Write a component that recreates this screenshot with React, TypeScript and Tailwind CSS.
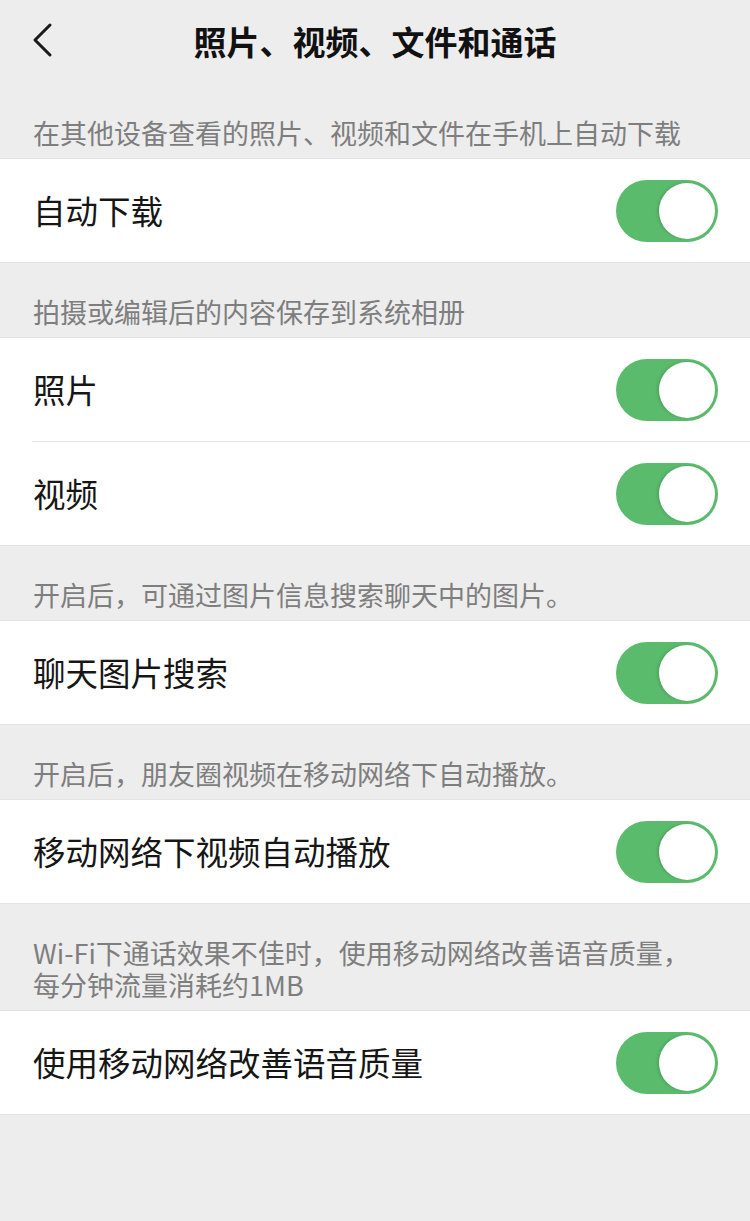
import { useState } from "react";

type Row = { id: string; label: string };
type Section = { caption: string[]; rows: Row[] };

const sections: Section[] = [
  {
    caption: ["在其他设备查看的照片、视频和文件在手机上自动下载"],
    rows: [{ id: "auto", label: "自动下载" }],
  },
  {
    caption: ["拍摄或编辑后的内容保存到系统相册"],
    rows: [
      { id: "photo", label: "照片" },
      { id: "video", label: "视频" },
    ],
  },
  {
    caption: ["开启后，可通过图片信息搜索聊天中的图片。"],
    rows: [{ id: "search", label: "聊天图片搜索" }],
  },
  {
    caption: ["开启后，朋友圈视频在移动网络下自动播放。"],
    rows: [{ id: "autoplay", label: "移动网络下视频自动播放" }],
  },
  {
    caption: ["Wi-Fi下通话效果不佳时，使用移动网络改善语音质量，", "每分钟流量消耗约1MB"],
    rows: [{ id: "voice", label: "使用移动网络改善语音质量" }],
  },
];

function Toggle({ on, onChange }: { on: boolean; onChange: () => void }) {
  return (
    <button
      onClick={onChange}
      className={`flex h-[62px] w-[102px] items-center rounded-full p-[3px] ${
        on ? "justify-end bg-[#5bbb6c]" : "justify-start bg-[#e5e5e5]"
      }`}
    >
      <span className="block h-[56px] w-[56px] rounded-full bg-white shadow-[-2px_0_3px_rgba(0,0,0,0.12)]" />
    </button>
  );
}

export default function App() {
  const [state, setState] = useState<Record<string, boolean>>({
    auto: true,
    photo: true,
    video: true,
    search: true,
    autoplay: true,
    voice: true,
  });

  return (
    <div
      className="min-h-[1221px] w-[750px] bg-[#ededed]"
      style={{ fontFamily: '"Noto Sans CJK SC", "Noto Sans", sans-serif' }}
    >
      <header className="relative flex h-[85px] items-center justify-center pb-[3px]">
        <button className="absolute left-[28px] top-[20px] flex h-[40px] w-[30px] items-center justify-center" aria-label="返回">
          <svg width="22" height="36" viewBox="0 0 22 36" fill="none">
            <path d="M18 3 L3 18 L18 33" stroke="#1a1a1a" strokeWidth="3" strokeLinecap="round" strokeLinejoin="round" />
          </svg>
        </button>
        <h1 className="text-[33px] font-semibold leading-none text-[#111]">照片、视频、文件和通话</h1>
      </header>

      {sections.map((s, i) => (
        <section key={i}>
          <div
            className={`px-[33px] pb-[9px] text-[27px] leading-[32px] text-[#7e7e7e] ${
              i === 0 ? "pt-[32px]" : "pt-[33px]"
            }`}
          >
            {s.caption.map((line) => (
              <p key={line}>{line}</p>
            ))}
          </div>
          <div className="border-y border-[#e3e3e3] bg-white">
            {s.rows.map((r, j) => (
              <div key={r.id} className={j > 0 ? "ml-[32px] border-t border-[#e3e3e3]" : ""}>
                <div className={`flex h-[103px] items-center pr-[32px] ${j > 0 ? "" : "pl-[33px]"}`}>
                  <span className={`flex-1 text-[32.5px] text-[#161616] ${j > 0 ? "pl-[1px]" : ""}`}>{r.label}</span>
                  <Toggle on={state[r.id]} onChange={() => setState((p) => ({ ...p, [r.id]: !p[r.id] }))} />
                </div>
              </div>
            ))}
          </div>
        </section>
      ))}
    </div>
  );
}
